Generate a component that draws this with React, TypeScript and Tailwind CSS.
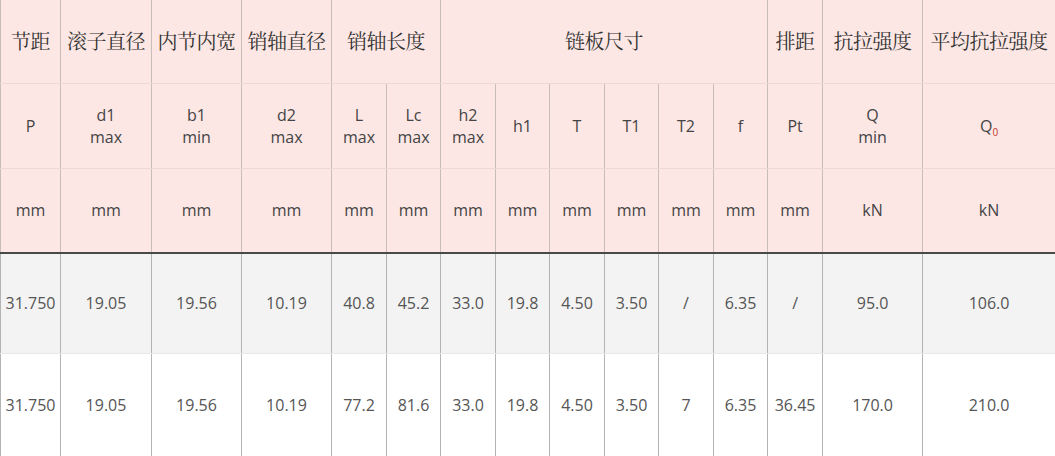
import React from "react";

const widths = [60, 91, 90, 90, 55, 54, 55, 54, 55, 54, 55, 54, 55, 100, 133];

const symbols: React.ReactNode[] = [
  "P",
  <>d1<br />max</>,
  <>b1<br />min</>,
  <>d2<br />max</>,
  <>L<br />max</>,
  <>Lc<br />max</>,
  <>h2<br />max</>,
  "h1",
  "T",
  "T1",
  "T2",
  "f",
  "Pt",
  <>Q<br />min</>,
  <>Q<sub className="text-[10px] text-[#c0392b] align-[-2px]">0</sub></>,
];

const units = ["mm", "mm", "mm", "mm", "mm", "mm", "mm", "mm", "mm", "mm", "mm", "mm", "mm", "kN", "kN"];

const rows = [
  ["31.750", "19.05", "19.56", "10.19", "40.8", "45.2", "33.0", "19.8", "4.50", "3.50", "/", "6.35", "/", "95.0", "106.0"],
  ["31.750", "19.05", "19.56", "10.19", "77.2", "81.6", "33.0", "19.8", "4.50", "3.50", "7", "6.35", "36.45", "170.0", "210.0"],
];

const cjk = "font-['Noto_Serif_CJK_SC','Noto_Sans_CJK_SC',serif] text-[20px] text-[#333]";
const th = "border-x border-[#c8beb9] border-y border-y-[#ecd7d3] text-center align-middle p-0 font-normal";

export default function App() {
  const groups: [string, number][] = [
    ["节距", 1],
    ["滚子直径", 1],
    ["内节内宽", 1],
    ["销轴直径", 1],
    ["销轴长度", 2],
    ["链板尺寸", 6],
    ["排距", 1],
    ["抗拉强度", 1],
    ["平均抗拉强度", 1],
  ];

  return (
    <div className="w-[1055px] h-[456px] overflow-hidden bg-white">
      <table className="border-collapse table-fixed w-[1055px] font-['Open_Sans',sans-serif] text-[16px] leading-[22px]">
        <colgroup>
          {widths.map((w, i) => (
            <col key={i} style={{ width: w }} />
          ))}
        </colgroup>
        <thead className="bg-[#fde7e4]">
          <tr className="h-[83px]">
            {groups.map(([label, span], i) => (
              <th key={i} colSpan={span} className={`${th} ${cjk} border-t-0 whitespace-nowrap tracking-[-0.5px]`}>
                {label}
              </th>
            ))}
          </tr>
          <tr className="h-[85px]">
            {symbols.map((s, i) => (
              <th key={i} className={`${th} text-[#444]`}>
                {s}
              </th>
            ))}
          </tr>
          <tr className="h-[85px] border-b-2 border-b-[#4a4a4a]">
            {units.map((u, i) => (
              <th key={i} className={`${th} text-[#444] border-b-2 border-b-[#4a4a4a]`}>
                {u}
              </th>
            ))}
          </tr>
        </thead>
        <tbody>
          {rows.map((r, ri) => (
            <tr key={ri} className={ri === 0 ? "h-[100px] bg-[#f3f3f3]" : "h-[104px] bg-white"}>
              {r.map((v, i) => (
                <td
                  key={i}
                  className="border-x border-[#b4b4b4] border-y border-y-[#e8e8e8] text-center align-middle p-0 text-[#555] whitespace-nowrap"
                >
                  {v}
                </td>
              ))}
            </tr>
          ))}
        </tbody>
      </table>
    </div>
  );
}
